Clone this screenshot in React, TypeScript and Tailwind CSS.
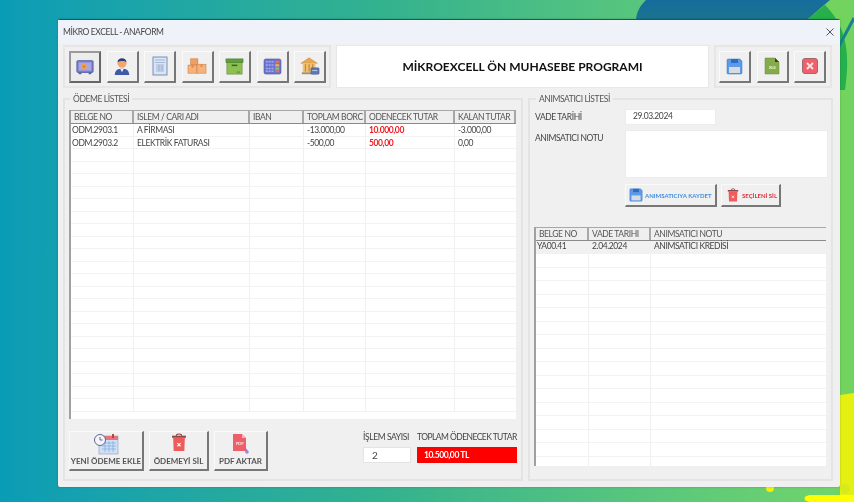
const FONT = "font-['Lato','Liberation_Sans',sans-serif]";

const paymentRows = [
  { belge: 'ODM.2903.1', islem: 'A FİRMASI', iban: '', borc: '-13.000,00', odenecek: '10.000,00', kalan: '-3.000,00' },
  { belge: 'ODM.2903.2', islem: 'ELEKTRİK FATURASI', iban: '', borc: '-500,00', odenecek: '500,00', kalan: '0,00' },
];
const EMPTY_LEFT = Array.from({ length: 21 });
const EMPTY_RIGHT = Array.from({ length: 16 });

const Background = () => (
  <svg className="absolute inset-0" width="854" height="502" viewBox="0 0 854 502">
    <defs>
      <linearGradient id="blueShape" x1="0" y1="0" x2="0" y2="1">
        <stop offset="0" stopColor="#166c9c" />
        <stop offset="1" stopColor="#20807a" />
      </linearGradient>
    </defs>
    <path d="M790 0 L854 0 L854 502 L835 502 L835 60 L790 30 Z" fill="#72d45f" />
    <path d="M646 0 C630 15 634 35 652 50 L800 50 L808 19 L830 0 Z" fill="url(#blueShape)" />
    <path d="M808 19 L825 5 C842 22 852 45 845 90 L835 90 L830 40 Z" fill="#25b04b" />
    <path d="M854 18 L838 48" stroke="#1a8090" strokeWidth="3" />
    <path d="M840 395 L854 393 L854 502 L840 502 Z" fill="#e3f012" />
    <path d="M812 502 C802 502 802 495 812 495 L854 495 L854 502 Z" fill="#ffff00" />
    <circle cx="770" cy="488" r="4" fill="#f5f000" />
    <circle cx="845" cy="489" r="5" fill="#d6ea1c" />
  </svg>
);

// toolbar icons
const SafeIcon = () => (
  <svg width="18" height="18" viewBox="0 0 20 20">
    <rect x="1" y="3" width="18" height="13" rx="1" fill="#7f7fd0" stroke="#55609c" />
    <rect x="3" y="5" width="14" height="9" fill="#a7a7e8" />
    <circle cx="9" cy="9.5" r="3" fill="#f0a040" />
    <circle cx="9" cy="9.5" r="1" fill="#c86a20" />
    <rect x="3" y="16" width="3" height="2" fill="#55609c" />
    <rect x="14" y="16" width="3" height="2" fill="#55609c" />
  </svg>
);
const PersonIcon = () => (
  <svg width="18" height="20" viewBox="0 0 20 22">
    <path d="M2 21 C2 15 6 14 10 14 C14 14 18 15 18 21 Z" fill="#3f5aa6" />
    <path d="M8 14 L10 18 L12 14 Z" fill="#f1f1f1" />
    <circle cx="10" cy="8" r="5" fill="#f4a66a" />
    <path d="M5 7 C5 1 15 1 15 7 C13 5 8 5 5 7 Z" fill="#2d3f78" />
  </svg>
);
const DocIcon = () => (
  <svg width="16" height="20" viewBox="0 0 16 20">
    <rect x="1" y="1" width="14" height="18" fill="#d6e6f8" stroke="#7d8db5" />
    <path d="M3 4 H13 M3 6.5 H13 M4 9 H12 M4 11 H12 M4 13 H12 M4 15 H12 M7 9 V15 M10 9 V15" stroke="#93a5c4" strokeWidth="0.7" />
  </svg>
);
const BoxesIcon = () => (
  <svg width="20" height="18" viewBox="0 0 22 20">
    <rect x="4" y="2" width="8" height="7" fill="#ef9f62" stroke="#c97a42" strokeWidth="0.6" />
    <rect x="1" y="9" width="10" height="9" fill="#f6b27a" stroke="#c97a42" strokeWidth="0.6" />
    <rect x="11" y="8" width="10" height="10" fill="#f6b27a" stroke="#c97a42" strokeWidth="0.6" />
    <path d="M15 8 H17 V11 H15 Z M5 9 H7 V12 H5 Z" fill="#d98a50" />
  </svg>
);
const CrateIcon = () => (
  <svg width="19" height="19" viewBox="0 0 20 20">
    <rect x="2" y="5" width="16" height="13" fill="#8cc152" stroke="#61803e" strokeWidth="0.6" />
    <rect x="1" y="2" width="18" height="4" fill="#5da03a" stroke="#4c7a32" strokeWidth="0.6" />
    <rect x="7" y="8" width="6" height="1.6" fill="#3f5f2a" />
    <path d="M13 15 V17 M15 15 V17" stroke="#5f7f3a" />
  </svg>
);
const KeypadIcon = () => (
  <svg width="19" height="17" viewBox="0 0 20 18">
    <rect x="1" y="1" width="18" height="16" rx="2" fill="#6c74cf" stroke="#4d558f" strokeWidth="0.6" />
    <path d="M3 4 H12 M3 7.5 H12 M3 11 H12 M3 14 H12" stroke="#a5aaf0" strokeWidth="1.6" strokeDasharray="2 1" />
    <rect x="13" y="3" width="4" height="2.5" fill="#e5705e" />
    <rect x="13" y="6.5" width="4" height="2.5" fill="#e5b05e" />
    <rect x="13" y="10" width="4" height="2.5" fill="#7cc36a" />
    <rect x="13" y="13" width="4" height="2" fill="#e5705e" />
  </svg>
);
const BankIcon = () => (
  <svg width="20" height="20" viewBox="0 0 22 22">
    <path d="M1 8 L10 2 L19 8 Z" fill="#e9a94f" stroke="#b97f35" strokeWidth="0.5" />
    <rect x="3" y="8" width="14" height="10" fill="#f2c06e" />
    <path d="M6 9 V17 M10 9 V17 M14 9 V17" stroke="#c08a40" strokeWidth="1.3" />
    <rect x="2" y="18" width="16" height="2" fill="#a88c5e" />
    <rect x="12" y="13" width="9" height="7" rx="1" fill="#5f78b5" stroke="#3e5185" strokeWidth="0.5" />
    <path d="M13.5 16 H19" stroke="#c5d2ee" />
  </svg>
);
const FloppyIcon = ({ size = 17 }: { size?: number }) => (
  <svg width={size} height={size} viewBox="0 0 17 17">
    <path d="M1 2 a1 1 0 0 1 1 -1 H14 L16 3 V15 a1 1 0 0 1 -1 1 H2 a1 1 0 0 1 -1 -1 Z" fill="#5b9bea" stroke="#3f74bd" strokeWidth="0.5" />
    <rect x="5" y="1" width="7" height="4" fill="#2f6cc0" />
    <rect x="3" y="9" width="11" height="6" fill="#d7dbe2" />
  </svg>
);
const XlsIcon = () => (
  <svg width="16" height="18" viewBox="0 0 16 18">
    <path d="M1 1 H11 L15 5 V17 H1 Z" fill="#84ab4c" stroke="#6a8a40" strokeWidth="0.5" />
    <path d="M11 1 L15 5 H11 Z" fill="#3a4030" />
    <text x="8" y="12" textAnchor="middle" fontSize="4.5" fontWeight="700" fill="#e8f3d4" fontFamily="Lato">XLS</text>
  </svg>
);
const CloseIcon = () => (
  <svg width="16" height="16" viewBox="0 0 16 16">
    <rect x="0.5" y="0.5" width="15" height="15" rx="2.5" fill="#f0606a" stroke="#9a6a6e" />
    <path d="M5 5 L11 11 M11 5 L5 11" stroke="#fbe3e3" strokeWidth="1.8" />
  </svg>
);
const TrashIcon = ({ size = 16 }: { size?: number }) => (
  <svg width={size} height={size * 1.2} viewBox="0 0 15 18">
    <path d="M5 2.5 C5 0.5 10 0.5 10 2.5" fill="none" stroke="#8a3a3a" />
    <rect x="1" y="2.5" width="13" height="2" fill="#8e4a4a" />
    <path d="M2 4.5 H13 L12.5 17 H2.5 Z" fill="#ef5b5b" />
    <path d="M6 9.5 L9 12.5 M9 9.5 L6 12.5" stroke="#fff" />
  </svg>
);
const CalendarIcon = () => (
  <svg width="26" height="22" viewBox="0 0 26 22">
    <rect x="6" y="3" width="19" height="18" fill="#cfe0f6" stroke="#8a9ac0" strokeWidth="0.6" />
    <rect x="6" y="3" width="19" height="4" fill="#e9737a" />
    <path d="M9 10 H23 M9 13 H23 M9 16 H23 M12 8 V19 M16 8 V19 M20 8 V19" stroke="#84aee0" strokeWidth="0.8" />
    <circle cx="7" cy="7" r="5.5" fill="#f3f5fb" stroke="#5d6a96" />
    <path d="M7 4 V7 H9.5" fill="none" stroke="#5d6a96" />
    <rect x="19" y="1" width="2" height="4" fill="#a34a50" />
  </svg>
);
const PdfIcon = () => (
  <svg width="18" height="22" viewBox="0 0 18 22">
    <path d="M1 1 H10 L14 5 V18 H1 Z" fill="#ef5f6a" />
    <path d="M10 1 L14 5 H10 Z" fill="#f7b8bd" />
    <text x="7.5" y="11.5" textAnchor="middle" fontSize="4.5" fontWeight="700" fill="#ffdfe1" fontFamily="Lato">PDF</text>
    <path d="M13 14 L16 18 L13.5 19.5 Z" fill="#9670c9" />
    <circle cx="15" cy="19" r="1.8" fill="#a884d8" />
  </svg>
);

// raised Excel form button: dark lower right edge
const RAISED = 'bg-[#f0f0f0] border-t border-l border-t-[#fafafa] border-l-[#fafafa] border-r-2 border-b-2 border-r-[#777] border-b-[#777]';

const ToolButton = ({ children, active }: { children: React.ReactNode; active?: boolean }) => (
  <div className={`w-[32px] h-[32px] flex items-center justify-center ${active ? 'bg-[#ececec] border-2 border-[#9a9a9a] border-r-[#666] border-b-[#666]' : RAISED}`}>
    {children}
  </div>
);

const ActionButton = ({ w, icon, label }: { w: string; icon: React.ReactNode; label: string }) => (
  <div className={`${w} h-[40px] flex flex-col items-center justify-between pt-[1px] pb-[3px] ${RAISED}`}>
    {icon}
    <span className="text-[8px] leading-[10px] font-bold tracking-normal text-[#555] whitespace-nowrap">{label}</span>
  </div>
);

const HeaderCell = ({ w, children }: { w: string; children: React.ReactNode }) => (
  <div className={`${w} shrink-0 h-full pl-[3px] flex items-center bg-[#efefef] border-r-2 border-r-[#a8a8a8] whitespace-nowrap`}>
    {children}
  </div>
);

const Legend = ({ children, className }: { children: React.ReactNode; className: string }) => (
  <span className={`absolute -top-[6px] bg-[#f0f0f0] px-[3px] text-[8.5px] leading-[11px] text-[#555] ${className}`}>{children}</span>
);

export default function App() {
  return (
    <div className={`relative w-[854px] h-[502px] overflow-hidden bg-gradient-to-r from-[#0a9cb6] via-[#33b28e] via-45% to-[#72d668] blur-[0.3px] tracking-[-0.4px] ${FONT}`}>
      <Background />
      <div className="relative ml-[58px] mt-[19px] inline-flex w-[782px] h-[468px] flex-col bg-[#f0f0f0] rounded-[2px] border-t border-t-[#3c4a55] shadow-[0_0_2px_#0004]">
        {/* title bar */}
        <div className="h-[24px] shrink-0 flex items-center justify-between pl-[5px] pr-[6px] bg-[#eff2f9] text-[8.5px] text-[#444]">
          <span>MİKRO EXCELL - ANAFORM</span>
          <svg width="8" height="8" viewBox="0 0 8 8"><path d="M0.5 0.5 L7.5 7.5 M7.5 0.5 L0.5 7.5" stroke="#555" strokeWidth="1" /></svg>
        </div>

        {/* toolbar */}
        <div className="h-[43px] shrink-0 flex gap-[5px] pl-[5px] mt-[1px]">
          <div className="w-[268px] flex items-center gap-[5.5px] pl-[4px] border-2 border-[#e6e6e6]">
            <ToolButton active><SafeIcon /></ToolButton>
            <ToolButton><PersonIcon /></ToolButton>
            <ToolButton><DocIcon /></ToolButton>
            <ToolButton><BoxesIcon /></ToolButton>
            <ToolButton><CrateIcon /></ToolButton>
            <ToolButton><KeypadIcon /></ToolButton>
            <ToolButton><BankIcon /></ToolButton>
          </div>
          <div className="w-[373px] flex items-center justify-center bg-white text-[12px] font-bold tracking-normal text-[#111] border border-[#e8e8e8]">
            MİKROEXCELL ÖN MUHASEBE PROGRAMI
          </div>
          <div className="w-[118px] flex items-center gap-[5.5px] pl-[3px] border-2 border-[#e6e6e6]">
            <ToolButton><FloppyIcon /></ToolButton>
            <ToolButton><XlsIcon /></ToolButton>
            <ToolButton><CloseIcon /></ToolButton>
          </div>
        </div>

        {/* panels */}
        <div className="flex gap-[5px] pl-[5px] mt-[10px]">
          {/* ödeme listesi */}
          <div className="relative w-[460px] h-[383px] border-2 border-[#e4e4e4] pl-[4px] pt-[10px]">
            <Legend className="left-[5px]">ÖDEME LİSTESİ</Legend>
            <div className="w-[447px] h-[309px] bg-white border-l-2 border-l-[#a0a0a0] text-[8.5px] text-[#444] overflow-hidden">
              <div className="h-[14px] flex border-t border-t-[#a8a8a8] border-b border-b-[#8a8a8a] text-[#555]">
                <HeaderCell w="w-[63px]">BELGE NO</HeaderCell>
                <HeaderCell w="w-[116px]">ISLEM / CARI ADI</HeaderCell>
                <HeaderCell w="w-[54px]">IBAN</HeaderCell>
                <HeaderCell w="w-[62px]">TOPLAM BORC</HeaderCell>
                <HeaderCell w="w-[89px]">ODENECEK TUTAR</HeaderCell>
                <HeaderCell w="w-[61px]">KALAN TUTAR</HeaderCell>
              </div>
              {paymentRows.map((r) => (
                <div key={r.belge} className="h-[12.5px] flex leading-[12px] border-b border-b-[#f3f3f3]">
                  <div className="w-[63px] pl-[1px] border-r border-r-[#f0f0f0]">{r.belge}</div>
                  <div className="w-[116px] pl-[3px] border-r border-r-[#f0f0f0]">{r.islem}</div>
                  <div className="w-[54px] border-r border-r-[#f0f0f0]" />
                  <div className="w-[62px] pl-[3px] border-r border-r-[#f0f0f0]">{r.borc}</div>
                  <div className="w-[89px] pl-[3px] border-r border-r-[#f0f0f0] font-bold text-[#f01a20]">{r.odenecek}</div>
                  <div className="w-[61px] pl-[3px]">{r.kalan}</div>
                </div>
              ))}
              {EMPTY_LEFT.map((_, i) => (
                <div key={i} className="h-[12.5px] flex border-b border-b-[#f3f3f3]">
                  <div className="w-[63px] border-r border-r-[#f0f0f0]" />
                  <div className="w-[116px] border-r border-r-[#f0f0f0]" />
                  <div className="w-[54px] border-r border-r-[#f0f0f0]" />
                  <div className="w-[62px] border-r border-r-[#f0f0f0]" />
                  <div className="w-[89px] border-r border-r-[#f0f0f0]" />
                </div>
              ))}
            </div>
            <div className="flex mt-[12px] h-[40px]">
              <div className="flex gap-[5px]">
                <ActionButton w="w-[75px]" icon={<CalendarIcon />} label="YENİ ÖDEME EKLE" />
                <ActionButton w="w-[60px]" icon={<TrashIcon />} label="ÖDEMEYİ SİL" />
                <ActionButton w="w-[54px]" icon={<PdfIcon />} label="PDF AKTAR" />
              </div>
              <div className="flex gap-[6px] ml-[95px] text-[8.5px] text-[#444]">
                <div className="w-[48px] flex flex-col">
                  <span className="leading-[11px] mt-[1px] whitespace-nowrap">İŞLEM SAYISI</span>
                  <div className="mt-[4px] h-[16px] bg-white border border-[#e4e4e4] pl-[8px] text-[10px] leading-[14px]">2</div>
                </div>
                <div className="w-[100px] flex flex-col">
                  <span className="leading-[11px] mt-[1px] whitespace-nowrap tracking-[-0.55px]">TOPLAM ÖDENECEK TUTAR</span>
                  <div className="mt-[4px] h-[16px] bg-[#ff0000] pl-[7px] text-[8.5px] leading-[16px] font-bold text-white">10.500,00 TL</div>
                </div>
              </div>
            </div>
          </div>

          {/* animsatici listesi */}
          <div className="relative w-[305px] h-[383px] border-2 border-[#e4e4e4] pl-[4px] pt-[9px]">
            <Legend className="left-[6px]">ANIMSATICI LİSTESİ</Legend>
            <div className="flex items-center h-[16px] text-[8.5px] text-[#444]">
              <span className="w-[91px] pl-[1px]">VADE TARİHİ</span>
              <div className="w-[91px] h-[16px] bg-white border border-[#ececec] pl-[7px] leading-[13px]">29.03.2024</div>
            </div>
            <div className="flex mt-[5px] text-[8.5px] text-[#444]">
              <span className="w-[91px] pl-[1px] leading-[16px]">ANIMSATICI NOTU</span>
              <div className="w-[203px] h-[48px] bg-white border border-[#ececec]" />
            </div>
            <div className="flex gap-[4px] ml-[91px] mt-[6px]">
              <div className={`w-[92px] h-[23px] flex items-center gap-[2px] pl-[3px] whitespace-nowrap tracking-normal ${RAISED}`}>
                <FloppyIcon size={14} />
                <span className="text-[6px] font-bold text-[#3f8fe0]">ANIMSATICIYA KAYDET</span>
              </div>
              <div className={`w-[60px] h-[23px] flex items-center gap-[3px] pl-[5px] whitespace-nowrap tracking-normal ${RAISED}`}>
                <TrashIcon size={12} />
                <span className="text-[6px] font-bold text-[#e0303a]">SEÇİLENİ SİL</span>
              </div>
            </div>
            <div className="w-[292px] h-[239px] mt-[20px] bg-white border-l-2 border-l-[#a0a0a0] text-[8.5px] text-[#444] overflow-hidden">
              <div className="h-[14px] flex border-t border-t-[#a8a8a8] border-b border-b-[#8a8a8a] text-[#555]">
                <HeaderCell w="w-[53px]">BELGE NO</HeaderCell>
                <HeaderCell w="w-[62px]">VADE TARIHI</HeaderCell>
                <HeaderCell w="w-[177px]">ANIMSATICI NOTU</HeaderCell>
              </div>
              <div className="h-[13px] flex leading-[11px] bg-[#f1f1f1]">
                <div className="w-[53px] pl-[1px]">YA00.41</div>
                <div className="w-[62px] pl-[3px]">2.04.2024</div>
                <div className="pl-[3px]">ANIMSATICI KREDİSİ</div>
              </div>
              {EMPTY_RIGHT.map((_, i) => (
                <div key={i} className="h-[13.5px] flex border-b border-b-[#f3f3f3]">
                  <div className="w-[53px] border-r border-r-[#f0f0f0]" />
                  <div className="w-[62px] border-r border-r-[#f0f0f0]" />
                </div>
              ))}
            </div>
          </div>
        </div>
      </div>
    </div>
  );
}
